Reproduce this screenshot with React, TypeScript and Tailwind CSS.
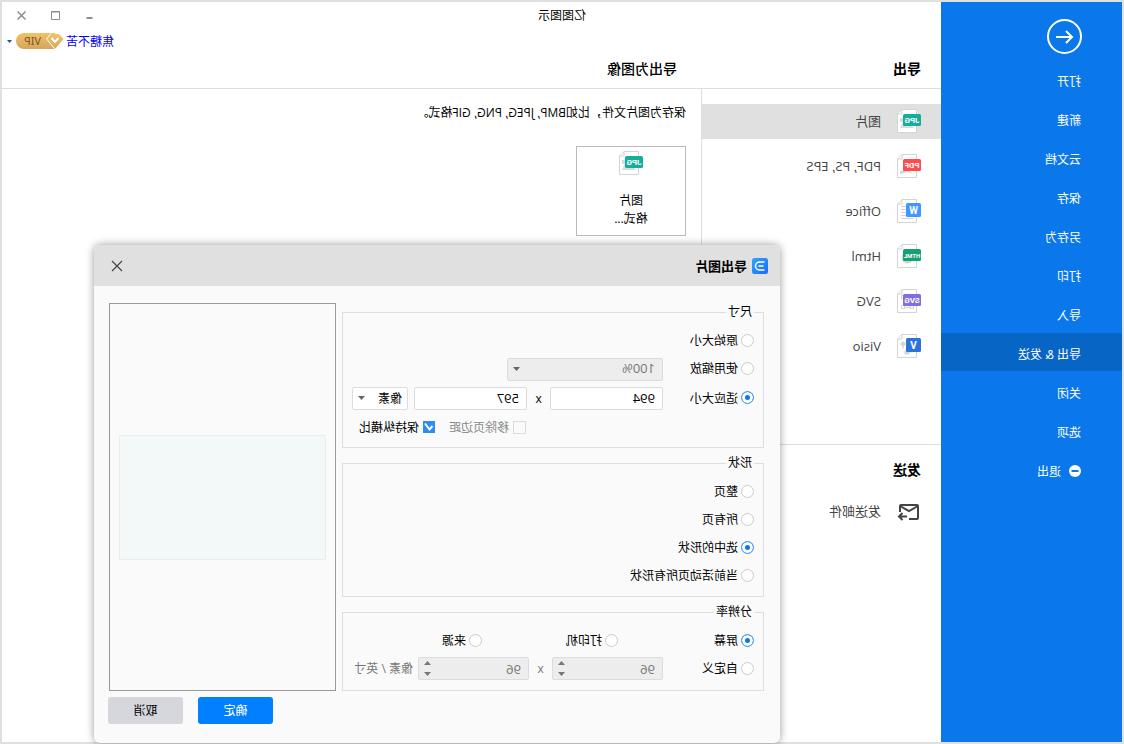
import { useState } from 'react'
import type { ReactNode } from 'react'
import clsx from 'clsx'

const MENU = ['打开', '新建', '云文档', '保存', '另存为', '打印', '导入', '导出 & 发送', '关闭', '选项']

type FileKind = 'jpg' | 'pdf' | 'office' | 'html' | 'svg' | 'visio'

const FORMATS: { kind: FileKind; label: string }[] = [
  { kind: 'jpg', label: '图片' },
  { kind: 'pdf', label: 'PDF, PS, EPS' },
  { kind: 'office', label: 'Office' },
  { kind: 'html', label: 'Html' },
  { kind: 'svg', label: 'SVG' },
  { kind: 'visio', label: 'Visio' },
]

const BADGES: Record<FileKind, { text: string; color: string; wide: boolean; size: number }> = {
  jpg: { text: 'JPG', color: '#16ad9d', wide: true, size: 8 },
  pdf: { text: 'PDF', color: '#ff4b50', wide: true, size: 8 },
  office: { text: 'W', color: '#3f97ff', wide: false, size: 10 },
  html: { text: 'HTML', color: '#16a077', wide: true, size: 6 },
  svg: { text: 'SVG', color: '#7f6ee6', wide: true, size: 8 },
  visio: { text: 'V', color: '#2b73d9', wide: false, size: 10 },
}

function FileIcon({ kind }: { kind: FileKind }) {
  const badge = BADGES[kind]
  return (
    <svg width="24" height="24" viewBox="0 0 24 24" className="shrink-0" aria-hidden="true">
      <path d="M4.500.5h14.500l4.500 4.500v18.500h-19z" fill="#fff" stroke="#d4d4d4" />
      <path d="M19 .5v4.500h4.500" fill="none" stroke="#d4d4d4" />
      {kind === 'jpg' && <path d="M7 19l4-4 6-5 4 9zM17 9h4v4h-4z" fill="#dcdcdc" />}
      {kind === 'pdf' && <path d="M7 20c3-1 4-3 5-5l9 2v3l-7-2z" fill="#d4d4d4" />}
      {kind === 'office' && (
        <path d="M8 7.500h12M8 10.500h12M8 13.500h12M8 16.500h12M8 19.500h12" stroke="#d4d4d4" />
      )}
      {kind === 'html' && <circle cx="13.500" cy="13.500" r="6" fill="#d4d4d4" />}
      {kind === 'svg' && (
        <path d="M8.500 8v9M17.500 8v9M10 18.500h7M7.500 16.500h3v3h-3zM16.500 16.500h3v3h-3zM16.500 6.500h3v3h-3z" fill="none" stroke="#d4d4d4" />
      )}
      {kind === 'visio' && (
        <path d="M18 7.500l2.500 2.500-2.500 2.500-2.500-2.500zM18 12v3M12 17h4v3h-4zM9 18h3" fill="#d4d4d4" stroke="#d4d4d4" />
      )}
      <rect x="0" y={badge.wide ? 5 : 4} width={badge.wide ? 18 : 15} height={badge.wide ? 12 : 14} rx="1.500" fill={badge.color} />
      <text
        x={badge.wide ? 9 : 7.5}
        y={badge.size === 10 ? 15 : 14}
        fontSize={badge.size}
        textAnchor="middle"
        fill="#fff"
        className="font-['Roboto',sans-serif] font-bold"
      >
        {badge.text}
      </text>
    </svg>
  )
}

function Caret({ className }: { className?: string }) {
  return (
    <svg width="7" height="4" viewBox="0 0 7 4" className={className} aria-hidden="true">
      <path d="M0 0h7L3.500 4z" fill="currentColor" />
    </svg>
  )
}

function Sidebar() {
  return (
    <nav className="w-[181px] shrink-0 bg-[#0a77eb] pt-[17px] text-xs text-white">
      <button type="button" aria-label="返回" className="ml-10 block">
        <svg width="35" height="35" viewBox="0 0 35 35" fill="none" stroke="#fff" strokeWidth="2">
          <circle cx="17.500" cy="17.500" r="16.500" />
          <path d="M26 18H10.500M16 12l-6 6 6 6" />
        </svg>
      </button>
      <ul className="mt-[6px]">
        {MENU.map((item) => (
          <li key={item} className="mb-px">
            <button
              type="button"
              className={clsx('flex h-[38px] w-full items-center pt-[6px] pl-[41px]', item === '导出 & 发送' && 'bg-[#0765c6]')}
            >
              {item}
            </button>
          </li>
        ))}
        <li>
          <button type="button" className="flex h-[38px] w-full items-center gap-2 pt-1 pl-[41px]">
            <svg width="12" height="12" viewBox="0 0 12 12" aria-hidden="true">
              <circle cx="6" cy="6" r="6" fill="#fff" />
              <path d="M2.500 6h7" stroke="#0a77eb" strokeWidth="2" />
            </svg>
            <span className="pt-[2px]">退出</span>
          </button>
        </li>
      </ul>
    </nav>
  )
}

function TitleBar() {
  return (
    <header>
      <div className="flex h-[26px] items-center justify-between pr-[3px] pl-[355px]">
        <h1 className="pt-[2px] text-xs">亿图图示</h1>
        <div className="flex text-[#8c8c8c]">
          <button type="button" aria-label="最小化" className="flex h-6 w-[34px] items-center justify-center">
            <svg width="9" height="9" viewBox="0 0 9 9">
              <path d="M1.500 7h6" stroke="currentColor" strokeWidth="2" />
            </svg>
          </button>
          <button type="button" aria-label="最大化" className="flex h-6 w-[34px] items-center justify-center">
            <svg width="9" height="9" viewBox="0 0 9 9">
              <path d="M.5.500h8v8h-8zM0 1h9" fill="none" stroke="currentColor" />
            </svg>
          </button>
          <button type="button" aria-label="关闭窗口" className="flex h-6 w-[34px] items-center justify-center">
            <svg width="9" height="9" viewBox="0 0 9 9">
              <path d="M.5.500l8 8M8.500.500l-8 8" stroke="currentColor" strokeWidth="1.500" />
            </svg>
          </button>
        </div>
      </div>
      <div className="flex h-[26px] items-center justify-end gap-[2px] pr-[5px]">
        <a href="#account" className="pt-[2px] text-xs text-[#0000ff]">焦糖不苦</a>
        <svg width="48" height="16" viewBox="0 0 48 16" role="img" aria-label="VIP">
          <defs>
            <linearGradient id="gold" x1="0" y1="0" x2="0" y2="1">
              <stop offset="0" stopColor="#f0c36a" />
              <stop offset="1" stopColor="#d5a55c" />
            </linearGradient>
          </defs>
          <path d="M9 0h31a8 8 0 0 1 0 16H9z" fill="url(#gold)" />
          <path d="M5 1h8l4.500 5L9 16 .5 6z" fill="url(#gold)" />
          <path d="M13 .5l4.500 5.500L9 16" fill="none" stroke="#fff" />
          <path d="M5.500 5L9 9l3.500-4" fill="none" stroke="#fff" strokeWidth="2" />
          <text x="23" y="12" fontSize="11" fill="#7a551c" className="font-['Noto_Sans',sans-serif]">
            VIP
          </text>
        </svg>
        <button type="button" aria-label="账户菜单" className="ml-[2px] text-[#0a5ab4]">
          <svg width="5" height="3" viewBox="0 0 5 3">
            <path d="M0 0h5L2.500 3z" fill="currentColor" />
          </svg>
        </button>
      </div>
      <div className="flex h-[35px] items-center border-b border-[#dedede] pb-1 text-sm leading-5">
        <h2 className="w-[244px] pl-5 font-bold">导出</h2>
        <h2 className="pl-5 font-medium">导出为图像</h2>
      </div>
    </header>
  )
}

function FormatList() {
  return (
    <aside className="w-60 shrink-0 border-r border-[#dedede] pt-[15px] text-[13px] text-[#444]">
      <ul className="space-y-[10px]">
        {FORMATS.map(({ kind, label }) => (
          <li key={kind}>
            <button
              type="button"
              className={clsx('flex h-[35px] w-full items-center gap-4 pb-px pl-5', kind === 'jpg' && 'bg-[#e0e0e0]')}
            >
              <FileIcon kind={kind} />
              <span className="pt-px">{label}</span>
            </button>
          </li>
        ))}
      </ul>
      <div className="mt-20 border-t border-[#dedede] pt-[15px]">
        <h2 className="pl-5 text-sm leading-5 font-bold text-black">发送</h2>
        <button type="button" className="mt-[14px] flex h-[35px] w-full items-center gap-4 pl-5">
          <svg width="24" height="18" viewBox="0 0 24 18" fill="none" stroke="#444" strokeWidth="2" aria-hidden="true">
            <path d="M12 16H4a1 1 0 0 1-1-1V3a1 1 0 0 1 1-1h16a1 1 0 0 1 1 1v6" />
            <path d="M3 3l9 5 9-5M14 13.500h8M18.500 10l3.500 3.500-3.500 3.500" />
          </svg>
          发送邮件
        </button>
      </div>
    </aside>
  )
}

function Group({ title, className, children }: { title: string; className?: string; children: ReactNode }) {
  return (
    <fieldset className={clsx('border border-[#dedede] px-[9px] pt-[6px]', className)}>
      <legend className="px-[2px] leading-4">{title}</legend>
      {children}
    </fieldset>
  )
}

interface RadioProps {
  name: string
  label: string
  value: string
  onChange: (label: string) => void
  className?: string
}

function Radio({ name, label, value, onChange, className }: RadioProps) {
  return (
    <label className={clsx('flex h-7 items-center gap-[3px]', className)}>
      <input
        type="radio"
        name={name}
        checked={value === label}
        onChange={() => onChange(label)}
        className="size-[13px] appearance-none rounded-full border border-[#ccc] bg-white checked:border-[#4b9df5] checked:bg-[#0a77eb] checked:shadow-[inset_0_0_0_3px_#fff]"
      />
      <span className="pt-[2px]">{label}</span>
    </label>
  )
}

function Spinner({ label }: { label: string }) {
  return (
    <span className="relative w-[111px] shrink-0 text-[#777]">
      <input
        type="text"
        aria-label={label}
        defaultValue="96"
        disabled
        className="block h-[23px] w-full rounded-[2px] border border-[#dcdcde] bg-[#ededed] px-[7px] pt-[2px] text-[13px]"
      />
      <Caret className="absolute top-1 right-[6px] rotate-180" />
      <Caret className="absolute right-[6px] bottom-1" />
    </span>
  )
}

const FIELD = 'h-[23px] w-[113px] rounded-[2px] border border-[#dcdcde] bg-white px-[7px] text-[13px]'

function ExportDialog() {
  const [size, setSize] = useState('适应大小')
  const [shape, setShape] = useState('选中的形状')
  const [resolution, setResolution] = useState('屏幕')

  return (
    <section
      role="dialog"
      aria-labelledby="export-title"
      className="absolute top-[243px] left-[342px] w-[686px] rounded-md bg-[#fafafa] text-xs shadow-[0_0_9px_rgba(0,0,0,0.4)]"
    >
      <div className="flex h-[41px] items-center gap-[5px] rounded-t-md bg-[#e0e0e0] pr-[17px] pl-3">
        <svg width="16" height="16" viewBox="0 0 16 16" aria-hidden="true">
          <defs>
            <linearGradient id="logo" x1="1" y1="0" x2="0" y2="1">
              <stop offset="0" stopColor="#2fa4ff" />
              <stop offset="1" stopColor="#1b6cf5" />
            </linearGradient>
          </defs>
          <rect width="16" height="16" rx="2.500" fill="url(#logo)" />
          <path d="M3.500 4H8.500a4 4 0 0 1 0 8h-5M4.500 8h5" fill="none" stroke="#fff" strokeWidth="1.500" />
        </svg>
        <h2 id="export-title" className="flex-1 pt-[2px] text-[13px] font-bold">导出图片</h2>
        <button type="button" aria-label="关闭">
          <svg width="12" height="12" viewBox="0 0 12 12">
            <path d="M1 1l10 10M11 1L1 11" stroke="#444" strokeWidth="1.200" />
          </svg>
        </button>
      </div>

      <div className="flex gap-[6px] pt-[17px] pr-[15px] pl-4">
        <div className="flex flex-1 flex-col gap-[7px] pt-px">
          <Group title="尺寸" className="pb-[6px]">
            <Radio name="size" label="原始大小" value={size} onChange={setSize} />
            <div className="flex h-7 items-center">
              <Radio name="size" label="使用缩放" value={size} onChange={setSize} className="w-[91px]" />
              <span className="relative mt-[2px] w-[156px]">
                <select
                  aria-label="缩放比例"
                  disabled
                  className="block h-[23px] w-full appearance-none rounded-[2px] border border-[#dcdcde] bg-[#ededed] px-[7px] text-[13px] text-[#777] opacity-100"
                >
                  <option>100%</option>
                </select>
                <Caret className="pointer-events-none absolute top-[9px] right-[6px] text-[#666]" />
              </span>
            </div>
            <div className="flex h-[31px] items-center pt-px">
              <Radio name="size" label="适应大小" value={size} onChange={setSize} className="w-[91px] pb-px" />
              <input type="text" aria-label="宽度" defaultValue="994" className={FIELD} />
              <span className="w-[23px] pt-[2px] text-center">x</span>
              <input type="text" aria-label="高度" defaultValue="597" className={FIELD} />
              <span className="relative ml-[6px] w-14">
                <select
                  aria-label="单位"
                  className="block h-[23px] w-full appearance-none rounded-[2px] border border-[#dcdcde] bg-white px-[5px] pt-px"
                >
                  <option>像素</option>
                </select>
                <Caret className="pointer-events-none absolute top-[9px] right-[6px] text-[#666]" />
              </span>
            </div>
            <div className="flex h-7 items-center gap-[14px] pl-[228px]">
              <label className="flex items-center gap-1 text-[#888]">
                <input type="checkbox" disabled className="size-[13px] appearance-none border border-[#dcdcde]" />
                <span className="pt-[2px]">移除页边距</span>
              </label>
              <label className="relative flex items-center gap-1">
                <input
                  type="checkbox"
                  defaultChecked
                  className="peer size-3 appearance-none border border-[#dcdcde] checked:border-[#2b8df5] checked:bg-[#2b8df5]"
                />
                <svg width="12" height="12" viewBox="0 0 12 12" className="pointer-events-none absolute left-0 hidden peer-checked:block">
                  <path d="M2.500 5L5.500 8.500 10 2.500" fill="none" stroke="#fff" strokeWidth="2" />
                </svg>
                <span className="pt-[2px]">保持纵横比</span>
              </label>
            </div>
          </Group>

          <Group title="形状" className="pb-[7px]">
            {['整页', '所有页', '选中的形状', '当前活动页所有形状'].map((label) => (
              <Radio key={label} name="shape" label={label} value={shape} onChange={setShape} />
            ))}
          </Group>

          <Group title="分辨率" className="pb-2">
            <div className="flex">
              {['屏幕', '打印机', '来源'].map((label) => (
                <Radio
                  key={label}
                  name="resolution"
                  label={label}
                  value={resolution}
                  onChange={setResolution}
                  className="w-[136px] last:w-auto"
                />
              ))}
            </div>
            <div className="flex h-7 items-center text-[#777]">
              <Radio name="resolution" label="自定义" value={resolution} onChange={setResolution} className="w-[91px] text-black" />
              <Spinner label="水平分辨率" />
              <span className="w-[23px] pt-[2px] text-center">x</span>
              <Spinner label="垂直分辨率" />
              <span className="ml-[5px] pt-[2px] whitespace-nowrap">像素 / 英寸</span>
            </div>
          </Group>
        </div>

        <div className="flex w-[227px] shrink-0 items-center border border-[#999] px-[9px]">
          <div className="h-[125px] w-full border border-[#ececec] bg-[#f3f9f9]" />
        </div>
      </div>

      <div className="flex justify-end gap-[15px] pt-[6px] pr-[14px] pb-[19px]">
        <button type="button" className="h-[27px] w-[75px] rounded-[3px] bg-[#0080ff] text-white">确定</button>
        <button type="button" className="h-[27px] w-[75px] rounded-[3px] bg-[#d5d7dc]">取消</button>
      </div>
    </section>
  )
}

export default function App() {
  return (
    <div className="relative flex min-h-screen -scale-x-100 border-2 border-[#e0e0e0] bg-white font-['Open_Sans','Noto_Sans_CJK_SC',sans-serif] text-black [font-kerning:none]">
      <Sidebar />
      <div className="flex flex-1 flex-col">
        <TitleBar />
        <div className="flex flex-1">
          <FormatList />
          <main className="flex-1 px-[15px] pt-[14px] text-xs">
            <p className="leading-5">保存为图片文件，比如BMP, JPEG, PNG, GIF格式。</p>
            <button
              type="button"
              className="mt-[23px] flex h-[90px] w-[110px] flex-col items-center border border-[#bbb] pt-1 leading-[18px]"
            >
              <FileIcon kind="jpg" />
              <span className="mt-[17px]">图片</span>
              <span>格式...</span>
            </button>
          </main>
        </div>
      </div>
      <ExportDialog />
    </div>
  )
}
